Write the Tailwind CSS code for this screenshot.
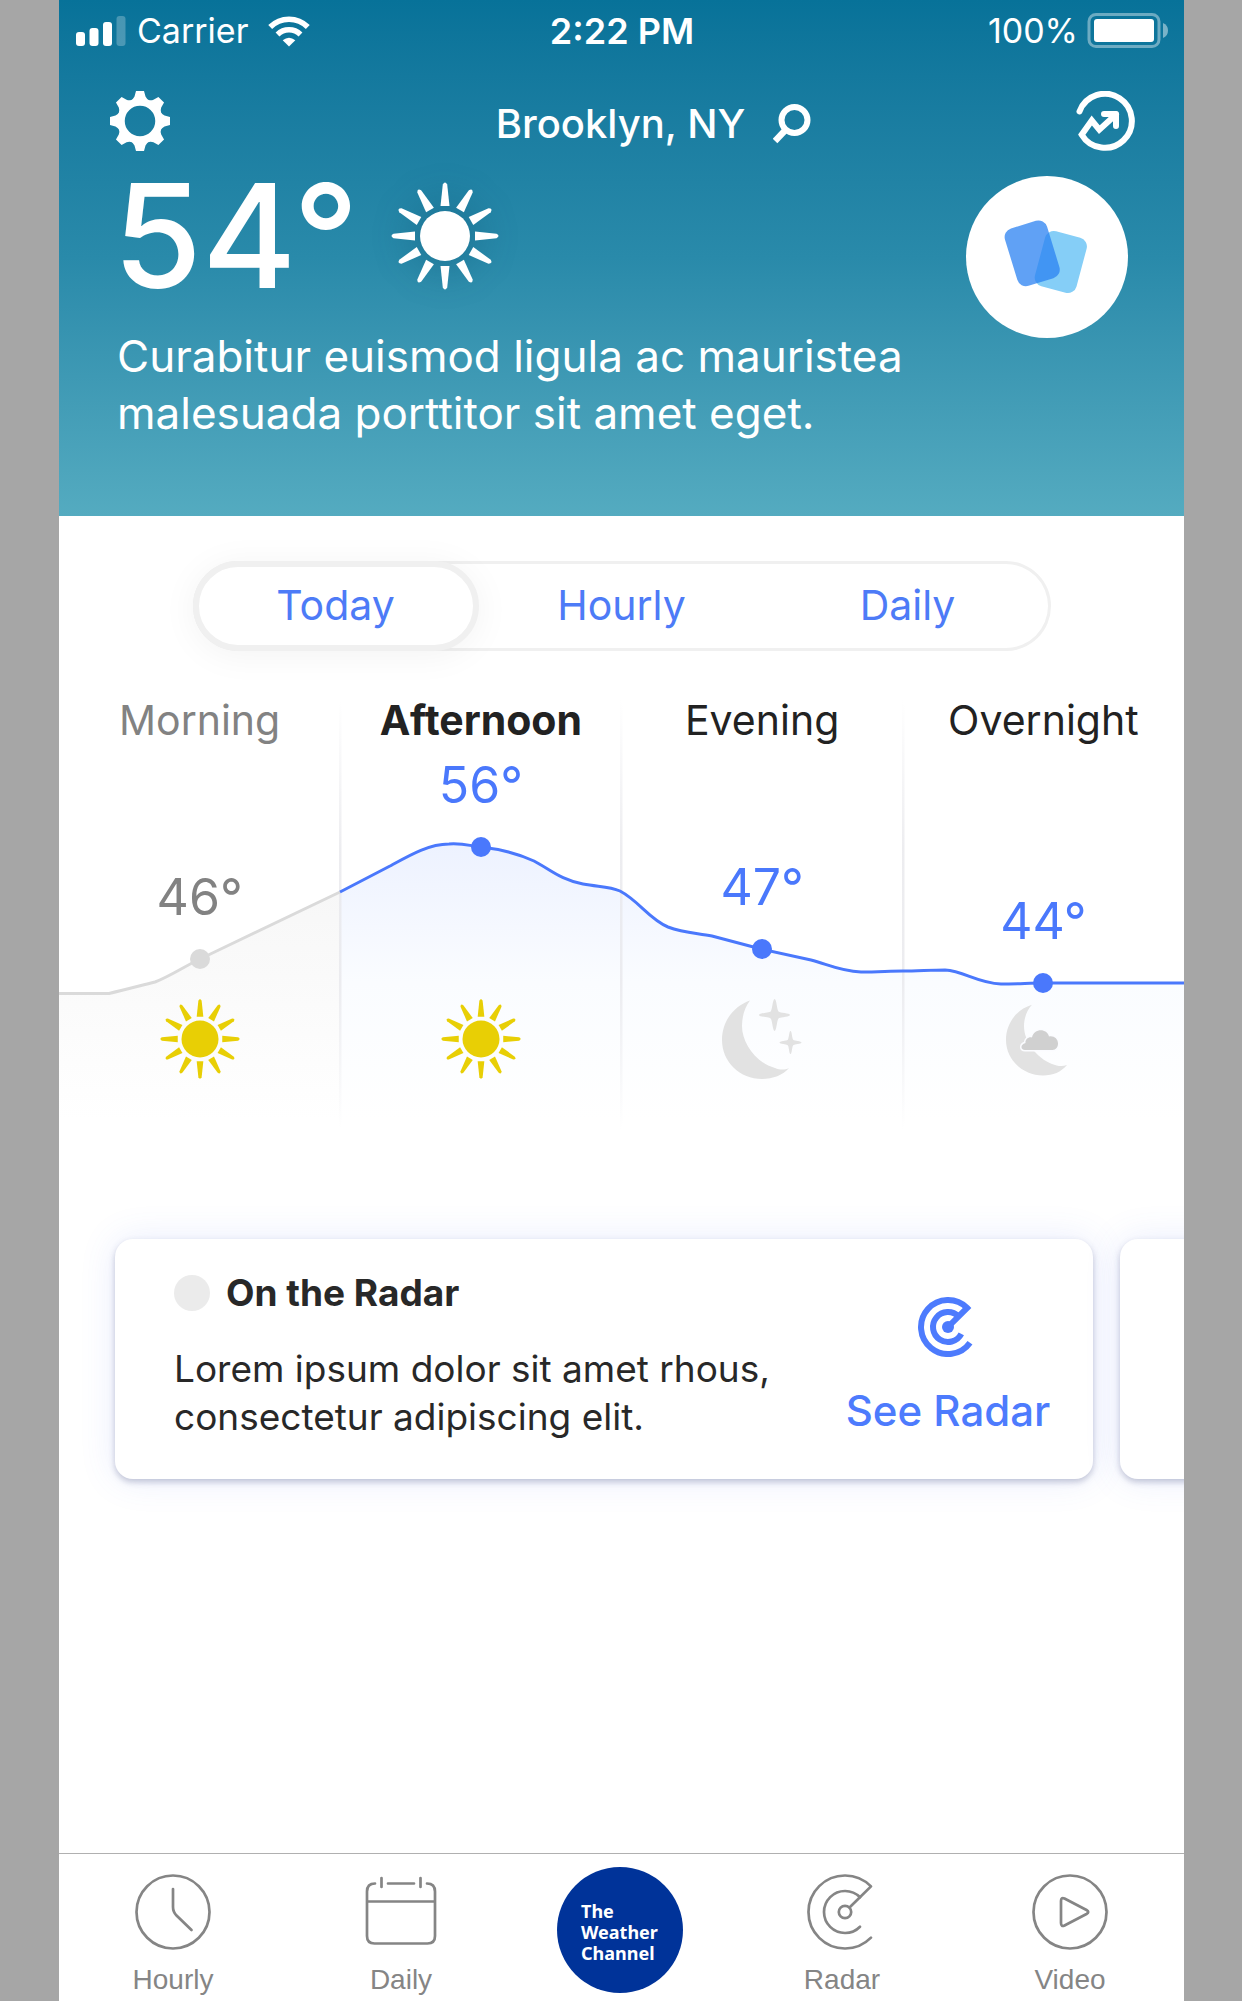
<!DOCTYPE html>
<html lang="en">
<head>
<meta charset="utf-8">
<meta name="viewport" content="width=device-width, initial-scale=1">
<title>Weather – Brooklyn, NY</title>
<script src="https://cdn.jsdelivr.net/npm/@tailwindcss/browser@4"></script>
</head>
<body class="min-h-screen bg-[#a6a6a6] pl-[59px] pr-[58px] font-['Inter',sans-serif]">
<svg class="hidden" aria-hidden="true">
  <defs>
    <path id="ray" d="M-4.5 -30 L-2.2 -51.5 Q0 -55.5 2.2 -51.5 L4.5 -30Z"/>
    <symbol id="sun" viewBox="-54 -54 108 108">
      <circle r="25"/>
      <use href="#ray"/><use href="#ray" transform="rotate(30)"/><use href="#ray" transform="rotate(60)"/><use href="#ray" transform="rotate(90)"/>
      <use href="#ray" transform="rotate(120)"/><use href="#ray" transform="rotate(150)"/><use href="#ray" transform="rotate(180)"/><use href="#ray" transform="rotate(210)"/>
      <use href="#ray" transform="rotate(240)"/><use href="#ray" transform="rotate(270)"/><use href="#ray" transform="rotate(300)"/><use href="#ray" transform="rotate(330)"/>
    </symbol>
    <path id="tooth" d="M-4 -30 H4 L5.5 -24.5 Q6.500 -22 10 -20 V-17 H-10 V-20 Q-6.500 -22 -5.500 -24.500Z"/>
  </defs>
</svg>

<div class="flex min-h-screen flex-col overflow-hidden bg-white">
  <header class="h-[516px] bg-linear-to-b from-[#077299] via-[#298aaa] via-50% to-[#54abc0] text-white">
    <!-- Status bar -->
    <div class="grid h-[62px] grid-cols-[1fr_auto_1fr] items-center pl-[17px] pr-4 text-[34px] leading-[62px]">
      <div class="flex items-center">
        <svg class="h-[30px] w-[50px]" viewBox="0 0 50 30" fill="#fff" aria-hidden="true">
          <rect y="16" width="9" height="14" rx="3"/><rect x="13.500" y="12" width="9" height="18" rx="3"/><rect x="27" y="6" width="9" height="24" rx="3"/><rect x="40.500" width="9" height="30" rx="3" opacity=".25"/>
        </svg>
        <span class="ml-[11px]">Carrier</span>
        <svg class="ml-5 h-[31px] w-[42px]" viewBox="0 0 42 31" aria-hidden="true">
          <path d="M2.200 11 A26.500 26.500 0 0 1 39.800 11" fill="none" stroke="#fff" stroke-width="5.500"/>
          <path d="M9.500 18.500 A16.500 16.500 0 0 1 32.500 18.500" fill="none" stroke="#fff" stroke-width="5.500"/>
          <path d="M14.700 24.300 Q21 19 27.300 24.300 L21 30.500Z" fill="#fff"/>
        </svg>
      </div>
      <span class="text-[36px] leading-[62px] font-semibold">2:22 PM</span>
      <div class="flex items-center justify-end gap-2">
        <span>100%</span>
        <svg class="h-[36px] w-[82px]" viewBox="0 0 82 36" aria-hidden="true">
          <rect x="3" y="1.500" width="70" height="32" rx="7" fill="none" stroke="#fff" stroke-opacity=".4" stroke-width="3"/>
          <rect x="8" y="6" width="60" height="23" rx="3" fill="#fff"/>
          <path d="M77 10 Q82 12 82 17.500 Q82 23 77 25Z" fill="#fff" fill-opacity=".45"/>
        </svg>
      </div>
    </div>

    <!-- Location bar -->
    <div class="grid h-[118px] grid-cols-[1fr_auto_1fr] items-center pl-[51px] pr-[49px]">
      <button type="button" aria-label="Settings" class="h-[60px] w-[60px]">
        <svg viewBox="-30 -30 60 60" fill="#fff">
          <circle r="18.500" fill="none" stroke="#fff" stroke-width="6.500"/>
          <use href="#tooth"/><use href="#tooth" transform="rotate(45)"/><use href="#tooth" transform="rotate(90)"/><use href="#tooth" transform="rotate(135)"/>
          <use href="#tooth" transform="rotate(180)"/><use href="#tooth" transform="rotate(225)"/><use href="#tooth" transform="rotate(270)"/><use href="#tooth" transform="rotate(315)"/>
        </svg>
      </button>
      <button type="button" class="flex items-center gap-7 pl-[62px] pt-1.5">
        <span class="text-[40px] leading-[60px] font-medium">Brooklyn, NY</span>
        <svg class="h-[40px] w-[38px]" viewBox="0 0 38 40" fill="none" stroke="#fff" aria-hidden="true">
          <circle cx="21.500" cy="16" r="13" stroke-width="6"/><path d="M12.500 26 L2 37" stroke-width="6.500"/>
        </svg>
      </button>
      <button type="button" aria-label="Trends" class="h-[60px] w-[60px] justify-self-end">
        <svg viewBox="-30 -30 60 60" fill="none" stroke="#fff" stroke-width="6">
          <path d="M-25.500 -9.500 A27 27 0 1 1 -23.300 13.700 L-13.200 -0.500 L-5.700 8.700 L11 -6.500" stroke-linecap="round"/>
          <path d="M-1 -7 H11 V5" stroke-linecap="round" stroke-linejoin="round"/>
        </svg>
      </button>
    </div>

    <!-- Current conditions -->
    <div class="flex items-start justify-between pl-[54px] pr-14">
      <div>
        <div class="flex h-[112px] items-center gap-8">
          <span class="text-[144px] leading-[112px] font-medium">54°</span>
          <svg class="h-[108px] w-[108px] drop-shadow-[0_0_12px_rgba(0,60,90,0.25)]" fill="#fff" role="img" aria-label="Sunny"><use href="#sun"/></svg>
        </div>
        <p class="mt-9 pl-1 text-[44px] leading-[57px]">Curabitur euismod ligula ac mauristea<br>malesuada porttitor sit amet eget.</p>
      </div>
      <button type="button" aria-label="Cards" class="-mt-1 flex h-[162px] w-[162px] shrink-0 items-center justify-center rounded-full bg-white">
        <svg class="h-[162px] w-[162px]" viewBox="-81 -81 162 162">
          <rect x="-21.500" y="-28.500" width="43" height="57" rx="9" transform="translate(13.800 5) rotate(15)" fill="#85cef7"/>
          <rect x="-22" y="-30" width="44" height="60" rx="9" transform="translate(-14.800 -3.700) rotate(-17)" fill="#2b82f2" fill-opacity=".75"/>
        </svg>
      </button>
    </div>
  </header>

  <main>
    <!-- Range switch -->
    <div class="mx-auto mt-[45px] grid h-[90px] w-[858px] max-w-full grid-cols-3 rounded-full text-[41px] text-[#4d7bf7] shadow-[inset_0_0_0_3px_#f0f0f0]">
      <button type="button" aria-pressed="true" class="rounded-full border-6 border-[#f0f0f0] bg-white shadow-[0_4px_36px_rgba(0,0,0,0.05)]">Today</button>
      <button type="button" aria-pressed="false">Hourly</button>
      <button type="button" aria-pressed="false">Daily</button>
    </div>

    <!-- Day chart -->
    <section class="relative mt-[39px] h-[450px]" aria-label="Temperature today">
      <svg class="absolute inset-0 h-full w-full" viewBox="0 0 1125 450" preserveAspectRatio="none" fill="none" aria-hidden="true">
        <defs>
          <linearGradient id="blueFill" gradientUnits="userSpaceOnUse" x1="0" y1="154" x2="0" y2="430">
            <stop offset="0" stop-color="#edf2ff"/><stop offset=".3" stop-color="#f5f8ff"/><stop offset=".5" stop-color="#fafcff"/><stop offset="1" stop-color="#fff"/>
          </linearGradient>
          <linearGradient id="grayFill" gradientUnits="userSpaceOnUse" x1="0" y1="200" x2="0" y2="430">
            <stop offset="0" stop-color="#f7f7f7"/><stop offset="1" stop-color="#fff"/>
          </linearGradient>
          <linearGradient id="rule" gradientUnits="userSpaceOnUse" x1="0" y1="10" x2="0" y2="440">
            <stop offset="0" stop-color="#e8e8ec" stop-opacity="0"/><stop offset=".35" stop-color="#e8e8ec" stop-opacity=".8"/><stop offset=".65" stop-color="#e8e8ec" stop-opacity=".8"/><stop offset="1" stop-color="#e8e8ec" stop-opacity="0"/>
          </linearGradient>
        </defs>
        <path fill="url(#grayFill)" d="M0 303.500 H50 C65 300 80 296 96 292 C110 287 128 275 141 269 L281 202 V440 H0Z"/>
        <path fill="url(#blueFill)" d="M281 202 L331 176 C351 165 370 154 390 154 C404 153 412 156 422 157 C440 159 460 164 475 171 C492 180 502 190 524 194 C540 197 550 196 561 201 C580 211 590 229 609 237 C625 243 638 243 653 246 L702 259 L752 270 C768 274 780 281 802 282 C820 282 830 281 844 281 C858 281 872 280 886 280 C905 281 918 293 942 294 C960 294 970 293 984 293 H1125 V440 H281Z"/>
        <path fill="url(#rule)" d="M280 10 h2.500 v430 h-2.500z M561 10 h2.500 v430 h-2.500z M843 10 h2.500 v430 h-2.500z"/>
        <path stroke="#dadada" stroke-width="3" d="M0 303.500 H50 C65 300 80 296 96 292 C110 287 128 275 141 269 L281 202"/>
        <path stroke="#4a78fc" stroke-width="3" d="M281 202 L331 176 C351 165 370 154 390 154 C404 153 412 156 422 157 C440 159 460 164 475 171 C492 180 502 190 524 194 C540 197 550 196 561 201 C580 211 590 229 609 237 C625 243 638 243 653 246 L702 259 L752 270 C768 274 780 281 802 282 C820 282 830 281 844 281 C858 281 872 280 886 280 C905 281 918 293 942 294 C960 294 970 293 984 293 H1125"/>
      </svg>
      <div class="relative grid h-full grid-cols-4 text-[#222]">
        <div class="flex flex-col items-center pb-[61px]">
          <h2 class="text-[41px] leading-[60px] text-[#828282]">Morning</h2>
          <span class="mt-[117px] text-[50px] leading-[60px] text-[#828282]">46°</span>
          <span class="mt-[22px] h-5 w-5 rounded-full bg-[#dadada]"></span>
          <svg class="mt-auto h-20 w-20" fill="#e8cf05" role="img" aria-label="Sunny"><use href="#sun"/></svg>
        </div>
        <div class="flex flex-col items-center pb-[61px]">
          <h2 class="text-[41px] leading-[60px] font-bold">Afternoon</h2>
          <span class="mt-[5px] text-[50px] leading-[60px] text-[#4a78fc]">56°</span>
          <span class="mt-[22px] h-5 w-5 rounded-full bg-[#4a78fc]"></span>
          <svg class="mt-auto h-20 w-20" fill="#e8cf05" role="img" aria-label="Sunny"><use href="#sun"/></svg>
        </div>
        <div class="flex flex-col items-center pb-[61px]">
          <h2 class="text-[41px] leading-[60px]">Evening</h2>
          <span class="mt-[107px] text-[50px] leading-[60px] text-[#4a78fc]">47°</span>
          <span class="mt-[22px] h-5 w-5 rounded-full bg-[#4a78fc]"></span>
          <svg class="mt-auto h-20 w-20" viewBox="0 0 80 80" fill="#e2e2e2" role="img" aria-label="Clear night">
            <path d="M28 1.500 C12 7 0 22 0 41 C0 63 18 80 40 80 C51 80 61 76 67 69 C63 71 58 71 53 69 C34 64 20 44 20 27 C20 17 23 8 28 1.500Z"/>
            <path d="M52.600 0 C54.500 0 55 11 56.500 12.500 C58 14 68 14 68 16 C68 18 58 18 56.500 19.500 C55 21 54.500 32 52.600 32 C50.700 32 50.200 21 48.700 19.500 C47.200 18 37 18 37 16 C37 14 47.200 14 48.700 12.500 C50.200 11 50.700 0 52.600 0Z"/>
            <path d="M68.500 32 C70 32 70 39.500 71.200 40.700 C72.400 41.900 79.500 42 79.500 43.500 C79.500 45 72.400 45.100 71.200 46.300 C70 47.500 70 55 68.500 55 C67 55 67 47.500 65.800 46.300 C64.600 45.100 57.500 45 57.500 43.500 C57.500 42 64.600 41.900 65.800 40.700 C67 39.500 67 32 68.500 32Z"/>
          </svg>
        </div>
        <div class="flex flex-col items-center pb-[61px]">
          <h2 class="text-[41px] leading-[60px]">Overnight</h2>
          <span class="mt-[141px] text-[50px] leading-[60px] text-[#4a78fc]">44°</span>
          <span class="mt-[22px] h-5 w-5 rounded-full bg-[#4a78fc]"></span>
          <svg class="mt-auto h-20 w-20" viewBox="0 0 80 80" role="img" aria-label="Partly cloudy night">
            <path fill="#e2e2e2" d="M29 5.700 C14 10 3 24 3 41 C3 61 20 76.500 40 76.500 C50 76.500 58 73 64 66 C59 68 54 67 49 65 C34 59 21 43 21 27 C21 19 24 11 29 5.700Z"/>
            <path fill="#d0d0d0" stroke="#fbfcff" stroke-width="3" paint-order="stroke" d="M22 51 C17.500 51 17 45.500 22.500 44 C22 40 26 37.500 29 38.500 C31 29 44 29 46 37.500 C51 36.500 55 40 55 44.500 C55 48 53 51 49.500 51Z"/>
          </svg>
        </div>
      </div>
    </section>

    <!-- Radar cards -->
    <section class="mt-[59px] flex gap-[27px] overflow-hidden py-10 pl-14">
      <article class="flex h-[240px] w-[978px] shrink-0 rounded-[18px] bg-white text-[#282828] shadow-[0_3px_6px_rgba(50,60,110,0.28),0_0_36px_rgba(74,110,240,0.13)]">
        <div class="flex-1 pl-[59px] pt-8">
          <div class="flex items-center gap-4">
            <span class="h-9 w-9 rounded-full bg-[#ebebeb]"></span>
            <h3 class="text-[37px] leading-[44px] font-bold">On the Radar</h3>
          </div>
          <p class="mt-[30px] text-[37px] leading-[48px]">Lorem ipsum dolor sit amet rhous,<br>consectetur adipiscing elit.</p>
        </div>
        <a href="#radar" class="flex w-[290px] flex-col items-center pt-[58px] text-[42px] leading-[56px] font-medium text-[#4d7bfd]">
          <svg class="h-[60px] w-[60px]" viewBox="-30 -30 60 60" fill="none" stroke="currentColor" stroke-width="6" aria-hidden="true">
            <path d="M22 15.700 A27 27 0 1 1 19.100 -19.100 L0 0"/>
            <path d="M13.300 6.900 A15 15 0 1 1 10.600 -10.600"/>
            <circle r="6" fill="currentColor" stroke="none"/>
          </svg>
          <span class="mt-[26px]">See Radar</span>
        </a>
      </article>
      <article class="h-[240px] w-[978px] shrink-0 rounded-[18px] bg-white shadow-[0_3px_6px_rgba(50,60,110,0.28),0_0_36px_rgba(74,110,240,0.13)]"></article>
    </section>
  </main>

  <!-- Tab bar -->
  <nav class="mt-auto grid h-[148px] grid-cols-[228fr_228fr_210fr_234fr_222fr] border-t border-[#b0b0b0] pr-[3px] font-['Liberation_Sans',sans-serif] text-[28px] leading-[34px] text-[#858585]">
    <a href="#hourly" class="flex flex-col items-center pt-[19px]">
      <svg class="h-[78px] w-[78px]" viewBox="-39 -39 78 78" fill="none" stroke="currentColor" stroke-width="2.700" stroke-linecap="round" aria-hidden="true">
        <circle r="36.500"/><path d="M0 -23 V-5 Q0 0 3.500 3.500 L18.500 18"/>
      </svg>
      <span class="mt-3">Hourly</span>
    </a>
    <a href="#daily" class="flex flex-col items-center pt-[19px]">
      <svg class="h-[78px] w-[78px]" viewBox="-39 -39 78 78" fill="none" stroke="currentColor" stroke-width="2.700" stroke-linecap="round" aria-hidden="true">
        <path d="M-26 -28.500 Q-34 -28.500 -34 -20.500 V24 Q-34 31.500 -26.500 31.500 H26.500 Q34 31.500 34 24 V-20.500 Q34 -28.500 26 -28.500 M-34 -10.500 H34 M-13 -28.500 H13 M-19.500 -34 V-25 M19.500 -34 V-25"/>
      </svg>
      <span class="mt-3">Daily</span>
    </a>
    <a href="#home" class="flex flex-col items-center pt-[13px]">
      <span class="flex h-[126px] w-[126px] items-center rounded-full bg-[#003399] pl-6 pt-1 font-['Noto_Sans',sans-serif] text-[18px] leading-[21px] font-bold text-white">The<br>Weather<br>Channel</span>
    </a>
    <a href="#radar" class="flex flex-col items-center pt-[19px]">
      <svg class="h-[78px] w-[78px]" viewBox="-42 -39 78 78" fill="none" stroke="currentColor" stroke-width="2.700" stroke-linecap="round" stroke-linejoin="round" aria-hidden="true">
        <path d="M26 25.600 A36.500 36.500 0 1 1 26 -25.600 L4.500 -4.500"/><path d="M15 14.700 A21 21 0 1 1 15 -14.700"/><circle r="6.200"/>
      </svg>
      <span class="mt-3">Radar</span>
    </a>
    <a href="#video" class="flex flex-col items-center pt-[19px]">
      <svg class="h-[78px] w-[78px]" viewBox="-39 -39 78 78" fill="none" stroke="currentColor" stroke-width="2.700" stroke-linejoin="round" aria-hidden="true">
        <circle r="36.500"/><path d="M-9 -11 Q-9 -15 -5.500 -13.500 L16.500 -2 Q20 0 16.500 2 L-5.500 13.500 Q-9 15 -9 11Z"/>
      </svg>
      <span class="mt-3">Video</span>
    </a>
  </nav>
</div>
</body>
</html>
